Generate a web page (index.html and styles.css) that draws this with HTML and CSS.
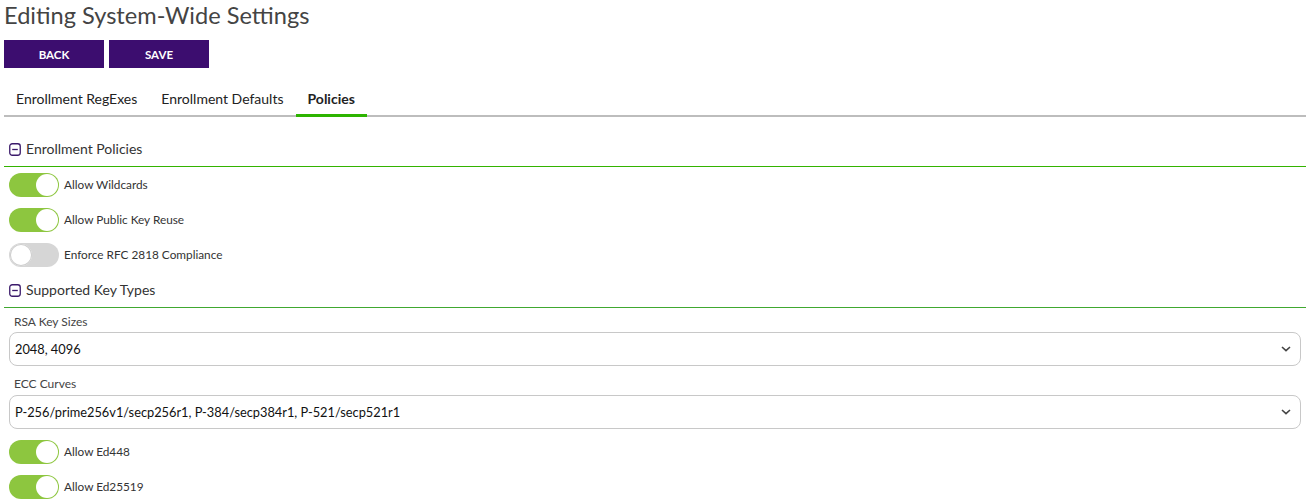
FILE: index.html
```html
<!DOCTYPE html>
<html>
<head>
<meta charset="utf-8">
<link rel="stylesheet" href="styles.css">
</head>
<body>
<div class="page">
  <h1 class="title">Editing System-Wide Settings</h1>
  <div class="actions">
    <button class="btn">BACK</button>
    <button class="btn">SAVE</button>
  </div>
  <div class="tabs">
    <div class="tab">Enrollment RegExes</div>
    <div class="tab">Enrollment Defaults</div>
    <div class="tab active">Policies</div>
  </div>

  <div class="section">
    <div class="section-head">
      <svg class="collapse" width="12" height="13" viewBox="0 0 12 13"><rect x="0.75" y="0.75" width="10.5" height="11.5" rx="2.5" fill="none" stroke="#3b1a6b" stroke-width="1.3"/><line x1="3.2" y1="6.5" x2="8.8" y2="6.5" stroke="#3b1a6b" stroke-width="1.3"/></svg>
      <span>Enrollment Policies</span>
    </div>
    <div class="toggle-row"><span class="toggle on"><span class="knob"></span></span><span class="tlabel">Allow Wildcards</span></div>
    <div class="toggle-row"><span class="toggle on"><span class="knob"></span></span><span class="tlabel">Allow Public Key Reuse</span></div>
    <div class="toggle-row"><span class="toggle off"><span class="knob"></span></span><span class="tlabel">Enforce RFC 2818 Compliance</span></div>
  </div>

  <div class="section">
    <div class="section-head second">
      <svg class="collapse" width="12" height="13" viewBox="0 0 12 13"><rect x="0.75" y="0.75" width="10.5" height="11.5" rx="2.5" fill="none" stroke="#3b1a6b" stroke-width="1.3"/><line x1="3.2" y1="6.5" x2="8.8" y2="6.5" stroke="#3b1a6b" stroke-width="1.3"/></svg>
      <span>Supported Key Types</span>
    </div>
    <div class="field">
      <div class="flabel">RSA Key Sizes</div>
      <div class="select"><span>2048, 4096</span><svg width="10" height="6" viewBox="0 0 10 6"><path d="M1 1 L5 4.6 L9 1" fill="none" stroke="#444" stroke-width="1.6"/></svg></div>
    </div>
    <div class="field">
      <div class="flabel">ECC Curves</div>
      <div class="select"><span>P-256/prime256v1/secp256r1, P-384/secp384r1, P-521/secp521r1</span><svg width="10" height="6" viewBox="0 0 10 6"><path d="M1 1 L5 4.6 L9 1" fill="none" stroke="#444" stroke-width="1.6"/></svg></div>
    </div>
    <div class="toggles-after">
      <div class="toggle-row"><span class="toggle on"><span class="knob"></span></span><span class="tlabel">Allow Ed448</span></div>
      <div class="toggle-row"><span class="toggle on"><span class="knob"></span></span><span class="tlabel">Allow Ed25519</span></div>
    </div>
  </div>
</div>
</body>
</html>
```
FILE: styles.css
```css
* { box-sizing: border-box; }
html, body { margin: 0; padding: 0; background: #fff; }
body { font-family: Lato, "Noto Sans", sans-serif; color: #333; }
.page { padding: 0 0 0 4px; }
.title {
  margin: 0;
  padding-top: 2px;
  font-size: 23.6px;
  font-weight: 400;
  line-height: 26px;
  color: #444;
  height: 40px;
}
.actions { display: flex; gap: 5px; height: 28px; }
.btn {
  width: 100px;
  height: 28px;
  border: 0;
  background: #3c0d6f;
  color: #fff;
  font-family: inherit;
  font-weight: 700;
  font-size: 11.5px;
  padding: 0;
}
.tabs {
  display: flex;
  margin-top: 16px;
  border-bottom: 2px solid #bdbdbd;
  height: 33px;
}
.tab {
  padding: 6px 12px 0;
  font-size: 14px;
  color: #222;
  height: 31px;
}
.tab.active {
  font-weight: 700;
  border-bottom: 3px solid #2db400;
  margin-bottom: -2px;
  height: 33px;
}
.section-head {
  display: flex;
  align-items: flex-start;
  gap: 5px;
  height: 50px;
  padding: 23px 0 0 5px;
  border-bottom: 1px solid #33b300;
  font-size: 14px;
  color: #333;
}
.section-head .collapse { margin-top: 3px; }
.section-head span { line-height: 18px; }
.section-head.second { height: 36px; padding-top: 9px; border-bottom-color: #40a830; }
.toggle-row {
  display: flex;
  align-items: center;
  height: 35px;
  padding-left: 5px;
}
.toggle {
  width: 50px;
  height: 24px;
  border-radius: 12px;
  display: flex;
  align-items: center;
  padding: 0 1px;
  flex: none;
}
.toggle.on { background: #8dc63f; justify-content: flex-end; }
.toggle.off { background: #d6d6d6; justify-content: flex-start; }
.knob {
  width: 22px;
  height: 22px;
  border-radius: 50%;
  background: #fff;
}
.toggle.off .knob { box-shadow: 0 0 0 1px #cfcfcf inset; }
.tlabel { font-size: 11.8px; margin-left: 5px; color: #333; }
.field { padding: 0 5px; }
.flabel { font-size: 12px; line-height: 14px; color: #444; padding: 7px 0 0 5px; height: 24px; }
.field + .field .flabel { padding-top: 11px; height: 29px; }
.select {
  height: 34px;
  border: 1px solid #c8c8c8;
  border-radius: 8px;
  display: flex;
  align-items: center;
  justify-content: space-between;
  padding: 0 9px 0 5px;
  font-size: 12.8px;
  color: #111;
}
.toggles-after { padding-top: 5px; }
```
